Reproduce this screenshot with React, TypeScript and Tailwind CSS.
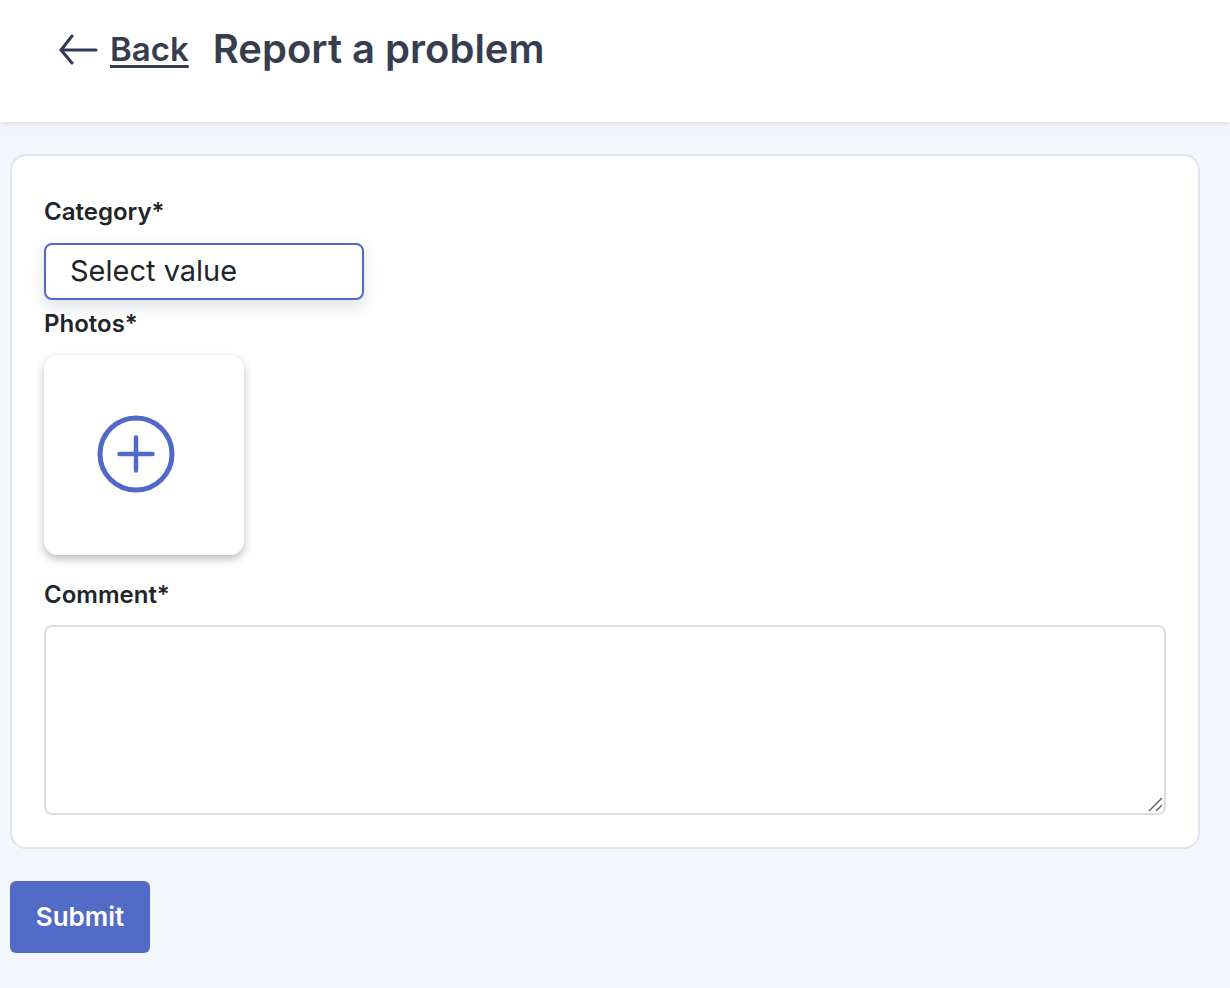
const labelClass = 'block text-[24px] leading-[28px] font-semibold text-[#212529]';

export default function App() {
  return (
    <div className="min-h-[988px] bg-[#f3f6fb] font-['Inter',sans-serif]">
      <header className="h-[122px] bg-white shadow-[0_2px_6px_rgba(50,60,90,0.12)] flex items-center pl-[58px] pb-[24px] gap-[24px] text-[#363d4e]">
        <a className="flex items-center gap-[12px]">
          <svg className="text-[#2f3a55]" width="40" height="32" viewBox="0 0 40 32" fill="none" stroke="currentColor" strokeWidth="3" strokeLinecap="round" strokeLinejoin="round">
            <path d="M38 17H3" />
            <path d="M14 3L3 17L14 30" />
          </svg>
          <span className="text-[33px] leading-[38px] font-semibold underline decoration-[3px] underline-offset-[4px]">Back</span>
        </a>
        <h1 className="text-[40px] leading-[46px] font-semibold">Report a problem</h1>
      </header>

      <main className="px-[10px] pt-[32px]">
        <div className="w-[1190px] h-[695px] bg-white border-2 border-[#e0e4f0] rounded-[16px] pl-[32px] pr-[32px] pt-[42px]">
          <label className={labelClass}>Category*</label>
          <div className="mt-[17px] w-[320px] h-[57px] border-2 border-[#5069c6] rounded-[8px] bg-white shadow-[0_6px_16px_rgba(40,50,80,0.16)] flex items-center pl-[24px] pb-[2px] text-[29px] text-[#212529]">
            Select value
          </div>
          <label className={`${labelClass} mt-[10px]`}>Photos*</label>
          <button className="mt-[17px] w-[200px] h-[200px] bg-white rounded-[14px] shadow-[0_4px_8px_rgba(40,40,50,0.3)] flex pl-[53px] pt-[60px]">
            <svg width="78" height="78" viewBox="0 0 78 78" fill="none" stroke="#5069c6" strokeLinecap="round">
              <circle cx="39" cy="39" r="36" strokeWidth="5" />
              <path d="M39 22.5V55.5M22.5 39H55.5" strokeWidth="4.5" />
            </svg>
          </button>
          <label className={`${labelClass} mt-[26px]`}>Comment*</label>
          <div className="relative mt-[16px] w-[1122px] h-[190px]">
            <textarea className="block w-full h-full border-2 border-[#dcdcdf] rounded-[8px] bg-white outline-none resize-none" />
            <svg className="absolute right-[3px] bottom-[3px]" width="15" height="15" viewBox="0 0 15 15" fill="none" stroke="#6b6b6b" strokeWidth="1.6">
              <path d="M1 14L14 1" />
              <path d="M8 14L14 8" />
            </svg>
          </div>
        </div>
        <button className="mt-[32px] w-[140px] h-[72px] bg-[#526bc7] rounded-[6px] text-white text-[26px] font-semibold pb-[2px]">
          Submit
        </button>
      </main>
    </div>
  );
}
